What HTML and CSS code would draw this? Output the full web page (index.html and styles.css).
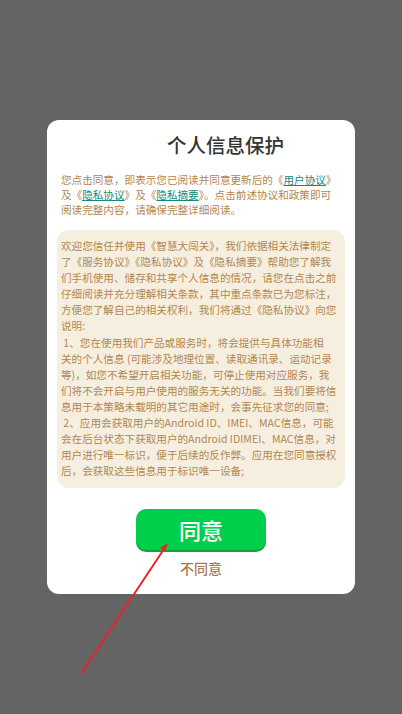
FILE: index.html
```html
<!DOCTYPE html>
<html lang="zh-CN">
<head>
<meta charset="utf-8">
<title>个人信息保护</title>
<link rel="stylesheet" href="styles.css">
</head>
<body>
<div class="screen">
  <div class="card">
    <h1 class="title">个人信息保护</h1>
    <p class="intro">您点击同意，即表示您已阅读并同意更新后的《<a class="link">用户协议</a>》及《<a class="link">隐私协议</a>》及《<a class="link">隐私摘要</a>》。点击前述协议和政策即可阅读完整内容，请确保完整详细阅读。</p>
    <div class="policy">
      <p>欢迎您信任并使用《智慧大闯关》，我们依据相关法律制定了《服务协议》《隐私协议》及《隐私摘要》帮助您了解我们手机使用、储存和共享个人信息的情况，请您在点击之前仔细阅读并充分理解相关条款，其中重点条款已为您标注，方便您了解自己的相关权利，我们将通过《隐私协议》向您说明:</p>
      <p>&nbsp;1、您在使用我们产品或服务时，将会提供与具体功能相<br>关的个人信息 (可能涉及地理位置、读取通讯录、运动记录等)，如您不希望开启相关功能，可停止使用对应服务，我们将不会开启与用户使用的服务无关的功能。当我们要将信息用于本策略未载明的其它用途时，会事先征求您的同意;</p>
      <p>&nbsp;2、应用会获取用户的Android ID、IMEI、MAC信息，可能会在后台状态下获取用户的Android IDIMEI、MAC信息，对用户进行唯一标识，便于后续的反作弊。应用在您同意授权后，会获取这些信息用于标识唯一设备;</p>
    </div>
    <div class="actions">
      <button class="agree">同意</button>
      <button class="disagree">不同意</button>
    </div>
  </div>
  <svg class="pointer" width="402" height="714" viewBox="0 0 402 714">
    <line x1="81" y1="674" x2="166" y2="546" stroke="#e8242b" stroke-width="2"/>
    <polygon points="168,543 160,548 165,552" fill="#e8242b"/>
  </svg>
</div>
</body>
</html>
```

FILE: styles.css
```css
html, body {
  margin: 0;
  padding: 0;
}
body {
  background: #646464;
  font-family: "Noto Sans CJK SC", "Noto Sans", sans-serif;
}
.screen {
  position: relative;
  width: 402px;
  height: 714px;
  display: flex;
  justify-content: center;
  align-items: flex-start;
}
.card {
  margin-top: 120px;
  width: 308px;
  height: 474px;
  box-sizing: border-box;
  background: #ffffff;
  border-radius: 12px;
  padding: 12px 10px 0 10px;
  display: flex;
  flex-direction: column;
}
.title {
  margin: 0;
  padding-left: 110px;
  font-size: 19.5px;
  line-height: 26px;
  font-weight: 500;
  color: #333333;
}
.intro {
  margin: 14px 0 0 0;
  padding: 0 4px;
  font-size: 10.6px;
  line-height: 15px;
  color: #b3864f;
}
.link {
  color: #158a7c;
  text-decoration: underline;
}
.policy {
  margin-top: 13px;
  background: #f6efe0;
  border-radius: 12px;
  padding: 8px 5.5px 9px 4px;
  font-size: 10.6px;
  line-height: 16.1px;
  color: #b3864f;
}
.policy p {
  margin: 0;
}
.actions {
  margin-top: 21px;
  display: flex;
  flex-direction: column;
  align-items: center;
}
.agree {
  width: 130px;
  height: 41px;
  border: none;
  border-radius: 10px;
  background: #00cf4c;
  box-shadow: 0 2px 0 #17a13e;
  color: #ffffff;
  font-family: inherit;
  font-size: 22px;
  font-weight: 500;
  padding: 0;
  line-height: 41px;
}
.disagree {
  margin-top: 9px;
  border: none;
  background: none;
  padding: 0;
  font-family: inherit;
  font-size: 14px;
  line-height: 18px;
  font-weight: 500;
  color: #a8794a;
}
.pointer {
  position: absolute;
  left: 0;
  top: 0;
  pointer-events: none;
}
```
